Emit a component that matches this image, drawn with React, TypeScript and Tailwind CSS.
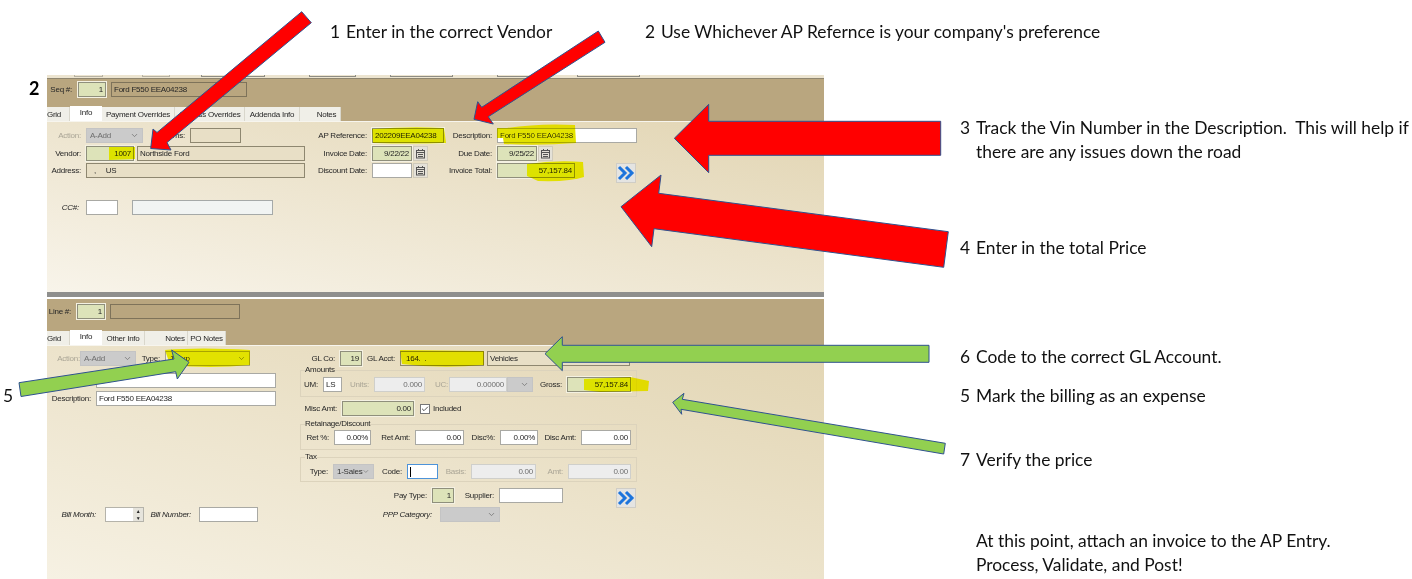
import type { ReactNode } from 'react';
import { Check, ChevronDown } from 'lucide-react';

const boxStyles = {
  green: 'border-[#8f8f7c] bg-[#dde3b9] shadow-[0_0_0_1px_#f4f1e2]',
  tan: 'border-[#8e8770] bg-[#e8dfc6]',
  band: 'border-[#7e735a] bg-[#b9a67f]',
  white: 'border-[#a9a9a4] bg-white',
  gray: 'border-[#cfcfcb] bg-[#ededed] text-[#6f6f6f]',
  sky: 'border-[#a5a9a8] bg-[#f1f4f3]',
  focus: 'border-[#4d93d9] bg-white'
};

function Box({
  w,
  kind = 'white',
  right = false,
  children
}: {
  w: string;
  kind?: keyof typeof boxStyles;
  right?: boolean;
  children?: ReactNode;
}) {
  return (
    <div
      className={`flex h-[15px] shrink-0 items-center overflow-hidden whitespace-nowrap border px-[2px] ${w} ${boxStyles[kind]} ${
        right ? 'justify-end' : ''
      }`}
    >
      {children}
    </div>
  );
}

function Label({
  w,
  muted = false,
  italic = false,
  pr = 'pr-[5px]',
  children
}: {
  w: string;
  muted?: boolean;
  italic?: boolean;
  pr?: string;
  children: ReactNode;
}) {
  return (
    <div
      className={`shrink-0 whitespace-nowrap text-right ${w} ${pr} ${muted ? 'text-[#aaa596]' : ''} ${
        italic ? 'italic' : ''
      }`}
    >
      {children}
    </div>
  );
}

function Select({ w, kind = 'gray', children }: { w: string; kind?: 'gray' | 'tan'; children?: ReactNode }) {
  return (
    <div
      className={`flex h-[15px] shrink-0 items-center justify-between whitespace-nowrap border px-[3px] ${w} ${
        kind === 'gray' ? 'border-[#c4c4c4] bg-[#cbcbcb] text-[#6d6d6d]' : 'border-[#a9a48f] bg-[#f0eee2]'
      }`}
    >
      <span>{children}</span>
      <ChevronDown size={9} color="#6f6f6f" />
    </div>
  );
}

function Row({ className = '', children }: { className?: string; children: ReactNode }) {
  return <div className={`flex h-[15px] items-center ${className}`}>{children}</div>;
}

function CalendarButton() {
  return (
    <div className="ml-px flex h-[15px] w-[15px] shrink-0 items-center justify-center border border-[#cfcabb] bg-[#e4e1d8]">
      <svg width="11" height="11" viewBox="0 0 11 11" fill="none" stroke="#555">
        <rect x="1.5" y="2.5" width="8" height="7.5" />
        <path d="M1.5 4.5h8M3.5 1v2M7.5 1v2M3 6.5h5M3 8.5h5" />
      </svg>
    </div>
  );
}

function NextButton() {
  return (
    <div className="flex h-[20px] w-[20px] shrink-0 items-center justify-center border border-[#cfcdc6] bg-[#e4e4e2]">
      <svg width="18" height="18" viewBox="0 0 18 18" fill="none" stroke="#1c74dc" strokeWidth="3">
        <path d="M2 3l6 6-6 6" />
        <path d="M9 3l6 6-6 6" />
      </svg>
    </div>
  );
}

function Tab({ w, active = false, children }: { w: string; active?: boolean; children?: ReactNode }) {
  return (
    <div
      className={`flex shrink-0 items-center justify-center whitespace-nowrap ${w} ${
        active ? 'h-[16px] bg-white' : 'h-[14px] border-r border-[#d9d7cc] bg-[#f0efe8] pt-px'
      }`}
    >
      {children}
    </div>
  );
}

function Group({ title, className, children }: { title: string; className: string; children: ReactNode }) {
  return (
    <fieldset className={`w-[337px] border border-[#dcd3bc] ${className}`}>
      <legend className="ml-[4px] h-[12px] leading-[12px]">{title}</legend>
      <Row>{children}</Row>
    </fieldset>
  );
}

function TopPanel() {
  return (
    <section>
      <div className="flex h-[3px] bg-[#ece4d0] pl-[27px]">
        <div className="h-[2px] w-[29px] border-b border-x border-[#b7b2a3]" />
        <div className="ml-[39px] h-[2px] w-[28px] border-b border-x border-[#b7b2a3]" />
        <div className="ml-[31px] h-[2px] w-[64px] border-b border-x border-[#8d8c84]" />
        <div className="ml-[44px] h-[2px] w-[47px] border-b border-x border-[#8d8c84]" />
        <div className="ml-[34px] h-[2px] w-[63px] border-b border-x border-[#8d8c84]" />
        <div className="ml-[44px] h-[2px] w-[47px] border-b border-x border-[#8d8c84]" />
        <div className="ml-[33px] h-[2px] w-[63px] border-b border-x border-[#8d8c84]" />
      </div>
      <div className="border-t border-[#8f8670] bg-[#b9a67f] pt-[3px]">
        <Row>
          <Label w="w-[31px]" pr="pr-[6px]">Seq #:</Label>
          <Box w="w-[28px]" kind="green" right>1</Box>
          <div className="ml-[5px]">
            <Box w="w-[136px]" kind="band">Ford F550 EEA04238</Box>
          </div>
        </Row>
        <div className="mt-[9px] flex h-[15px] items-end overflow-hidden">
          <Tab w="w-[23px]"><span className="-ml-[8px]">Grid</span></Tab>
          <Tab w="w-[32px]" active>Info</Tab>
          <Tab w="w-[73px]">Payment Overrides</Tab>
          <Tab w="w-[70px]">Address Overrides</Tab>
          <Tab w="w-[55px]">Addenda Info</Tab>
          <Tab w="w-[41px]"><span className="pl-[13px]">Notes</span></Tab>
        </div>
      </div>
      <div className="h-[171px] border-t border-[#f7f5ee] bg-linear-to-bl from-[#e2d5b3] to-[#f8f4ea] pt-[6px]">
        <div className="flex">
          <div className="w-[263px] shrink-0">
            <Row>
              <Label w="w-[39px]" muted>Action:</Label>
              <Select w="w-[57px]">A-Add</Select>
              <Label w="w-[47px]">Terms:</Label>
              <Box w="w-[51px]" kind="tan" />
            </Row>
            <Row className="mt-[3px]">
              <Label w="w-[39px]">Vendor:</Label>
              <Box w="w-[48px]" kind="green" right>1007</Box>
              <div className="ml-[3px]">
                <Box w="w-[168px]" kind="tan">Northside Ford</Box>
              </div>
            </Row>
            <Row className="mt-[2px]">
              <Label w="w-[39px]">Address:</Label>
              <Box w="w-[219px]" kind="tan"><span className="whitespace-pre pl-[5px]">,     US</span></Box>
            </Row>
            <Row className="mt-[22px]">
              <Label w="w-[39px]" italic pr="pr-[7px]">CC#:</Label>
              <Box w="w-[32px]" />
              <div className="ml-[14px]">
                <Box w="w-[141px]" kind="sky" />
              </div>
            </Row>
          </div>
          <div>
            <Row>
              <Label w="w-[62px]">AP Reference:</Label>
              <Box w="w-[72px]" kind="green">202209EEA04238</Box>
              <Label w="w-[53px]">Description:</Label>
              <Box w="w-[140px]">Ford F550 EEA04238</Box>
            </Row>
            <Row className="mt-[3px]">
              <Label w="w-[62px]">Invoice Date:</Label>
              <Box w="w-[40px]" kind="green" right>9/22/22</Box>
              <CalendarButton />
              <Label w="w-[69px]">Due Date:</Label>
              <Box w="w-[40px]" kind="green" right>9/25/22</Box>
              <CalendarButton />
            </Row>
            <Row className="mt-[2px]">
              <Label w="w-[62px]">Discount Date:</Label>
              <Box w="w-[40px]" />
              <CalendarButton />
              <Label w="w-[69px]">Invoice Total:</Label>
              <Box w="w-[78px]" kind="green" right>57,157.84</Box>
              <div className="ml-[41px] mt-[5px]">
                <NextButton />
              </div>
            </Row>
          </div>
        </div>
      </div>
    </section>
  );
}

function BottomPanel() {
  return (
    <section>
      <div className="bg-[#b9a67f] pt-[5px]">
        <Row>
          <Label w="w-[30px]" pr="pr-[6px]">Line #:</Label>
          <Box w="w-[28px]" kind="green" right>1</Box>
          <div className="ml-[5px]">
            <Box w="w-[130px]" kind="band" />
          </div>
        </Row>
        <div className="mt-[11px] flex h-[15px] items-end overflow-hidden">
          <Tab w="w-[23px]"><span className="-ml-[8px]">Grid</span></Tab>
          <Tab w="w-[32px]" active>Info</Tab>
          <Tab w="w-[43px]">Other Info</Tab>
          <Tab w="w-[43px]"><span className="pl-[18px]">Notes</span></Tab>
          <Tab w="w-[38px]">PO Notes</Tab>
        </div>
      </div>
      <div className="h-[234px] border-t border-[#f7f5ee] bg-linear-to-bl from-[#e2d5b3] to-[#f6f1e3] pt-[5px]">
        <div className="flex">
          <div className="w-[253px] shrink-0">
            <Row>
              <Label w="w-[33px]" muted pr="pr-0">Action:</Label>
              <Select w="w-[56px]">A-Add</Select>
              <Label w="w-[29px]">Type:</Label>
              <Select w="w-[85px]" kind="tan">
                <span className="pl-px">1-Exp</span>
              </Select>
            </Row>
            <Row className="mt-[7px]">
              <div className="w-[49px]" />
              <Box w="w-[180px]" />
            </Row>
            <Row className="mt-[3px]">
              <Label w="w-[49px]">Description:</Label>
              <Box w="w-[180px]">Ford F550 EEA04238</Box>
            </Row>
            <Row className="mt-[101px]">
              <Label w="w-[58px]" italic pr="pr-[9px]">Bill Month:</Label>
              <div className="flex h-[15px] w-[39px] border border-[#b5b3aa] bg-white">
                <div className="flex-1" />
                <div className="flex w-[10px] flex-col items-center justify-center gap-px bg-[#e6e4dc] text-[5px] leading-[6px]">
                  <span>▲</span>
                  <span>▼</span>
                </div>
              </div>
              <Label w="w-[55px]" italic pr="pr-[8px]">Bill Number:</Label>
              <Box w="w-[59px]" />
            </Row>
          </div>
          <div>
            <Row>
              <Label w="w-[40px]">GL Co:</Label>
              <Box w="w-[22px]" kind="green" right>19</Box>
              <Label w="w-[38px]">GL Acct:</Label>
              <Box w="w-[84px]" kind="tan"><span className="whitespace-pre pl-[3px]">164.  .</span></Box>
              <div className="ml-[3px]">
                <Box w="w-[143px]" kind="tan">Vehicles</Box>
              </div>
            </Row>
            <Group title="Amounts" className="-mt-[2px] pb-[4px] pt-px">
              <Label w="w-[22px]">UM:</Label>
              <Box w="w-[19px]">LS</Box>
              <Label w="w-[32px]" muted>Units:</Label>
              <Box w="w-[51px]" kind="gray" right>0.000</Box>
              <Label w="w-[24px]" muted pr="pr-px">UC:</Label>
              <Box w="w-[58px]" kind="gray" right>0.00000</Box>
              <Select w="w-[26px]" />
              <Label w="w-[34px]">Gross:</Label>
              <Box w="w-[64px]" kind="green" right>57,157.84</Box>
            </Group>
            <Row className="mt-[4px]">
              <Label w="w-[42px]">Misc Amt:</Label>
              <Box w="w-[72px]" kind="green" right>0.00</Box>
              <div className="ml-[6px] flex h-[10px] w-[10px] items-center justify-center border border-[#777] bg-white">
                <Check size={8} strokeWidth={2.5} color="#333" />
              </div>
              <span className="ml-[3px]">Included</span>
            </Row>
            <Group title="Retainage/Discount" className="mt-[2px] pb-[4px]">
              <Label w="w-[33px]">Ret %:</Label>
              <Box w="w-[37px]" right>0.00%</Box>
              <Label w="w-[44px]">Ret Amt:</Label>
              <Box w="w-[49px]" right>0.00</Box>
              <Label w="w-[36px]">Disc%:</Label>
              <Box w="w-[38px]" right>0.00%</Box>
              <Label w="w-[43px]">Disc Amt:</Label>
              <Box w="w-[50px]" right>0.00</Box>
            </Group>
            <Group title="Tax" className="mt-px pb-[2px] pt-px">
              <Label w="w-[32px]">Type:</Label>
              <Select w="w-[41px]">
                <span className="text-[#333]">1-Sales</span>
              </Select>
              <Label w="w-[33px]">Code:</Label>
              <Box w="w-[31px]" kind="focus"><span className="h-[10px] w-px bg-black" /></Box>
              <Label w="w-[33px]" muted>Basis:</Label>
              <Box w="w-[65px]" kind="gray" right>0.00</Box>
              <Label w="w-[32px]" muted>Amt:</Label>
              <Box w="w-[63px]" kind="gray" right>0.00</Box>
            </Group>
            <Row className="mt-[6px]">
              <Label w="w-[132px]">Pay Type:</Label>
              <Box w="w-[22px]" kind="green" right>1</Box>
              <Label w="w-[45px]">Supplier:</Label>
              <Box w="w-[64px]" />
              <div className="ml-[53px] mt-[5px]">
                <NextButton />
              </div>
            </Row>
            <Row className="mt-[4px]">
              <Label w="w-[140px]" italic pr="pr-[8px]">PPP Category:</Label>
              <Select w="w-[60px]" />
            </Row>
          </div>
        </div>
      </div>
    </section>
  );
}

function Note({ className, num, children }: { className: string; num: string; children: ReactNode }) {
  return (
    <div className={`absolute flex whitespace-pre ${className}`}>
      <span className="w-[16px]">{num}</span>
      <span>{children}</span>
    </div>
  );
}

const highlights = [
  'M372 129 Q410 126 444 128 L446 143 Q410 144 373 143 Z',
  'M109 147 L135 147 L135 159 L109 160 Z',
  'M497 128 L507 128 Q540 123 575 125 L576 143 Q540 146 504 144 L503 138 L497 138 Z',
  'M527 164 Q555 160 583 162 L584 177 Q570 182 538 181 L527 176 Z',
  'M165 350 Q200 347 250 350 L250 365 Q210 369 170 365 Z',
  'M400 350 L484 351 L484 365 Q440 369 402 364 Z',
  'M584 379 L630 377 L649 381 L648 391 L600 392 L584 390 Z'
];

const arrows = [
  {
    fill: '#ff0000',
    points: '301.7,11.7 311.3,22.7 167,142.5 171,150 150.7,148.5 153,129 157,132.5'
  },
  {
    fill: '#ff0000',
    points: '598.3,31 605,42.3 488.3,116.7 493.3,124 474,119.3 477.7,101.7 481.7,107.3'
  },
  {
    fill: '#ff0000',
    points: '674.3,138.3 708.7,104.3 708.7,121.3 940.7,121.3 940.7,155.3 708.7,155.3 708.7,172.7'
  },
  {
    fill: '#ff0000',
    points: '621,206.7 661,175 658.7,193.3 948.3,231.7 943.7,267.3 654,228.7 651.7,246.7'
  },
  {
    fill: '#92d050',
    points: '545,353.7 562.3,336.7 562.3,345.3 929,345.3 929,362.3 562.3,362.3 562.3,370.7'
  },
  {
    fill: '#92d050',
    points: '672.7,402.3 684,393.3 682.3,399.3 945.3,443.3 943.7,454 681,409.3 681.7,414.3'
  },
  {
    fill: '#92d050',
    points: '189,362.3 171.7,350 174,359 19,382.7 21,396.5 175.7,371.7 177.3,379'
  }
];

export default function App() {
  return (
    <div className="relative h-[579px] w-[1412px] overflow-hidden bg-white font-['Liberation_Sans',Arial,sans-serif] text-[8px] tracking-[-0.25px] text-[#262626]">
      <div className="ml-[47px] w-[777px] pt-[75px] blur-[0.35px]">
        <TopPanel />
        <div className="h-[5px] bg-[#8f8f8d]" />
        <div className="h-[2px] bg-white" />
        <BottomPanel />
      </div>

      <svg className="pointer-events-none absolute left-0 top-0 mix-blend-darken blur-[0.5px]" width="1412" height="579">
        {highlights.map((d) => (
          <path key={d} d={d} fill="#e2e200" />
        ))}
      </svg>
      <svg className="pointer-events-none absolute left-0 top-0" width="1412" height="579">
        {arrows.map((arrow) => (
          <polygon key={arrow.points} points={arrow.points} fill={arrow.fill} stroke="#2f528f" strokeWidth="1" />
        ))}
      </svg>

      <div className="font-['Lato',sans-serif] text-[17.4px] leading-[24px] tracking-normal text-[#111]">
        <div className="absolute left-[29px] top-[76px] text-[18px] font-bold text-black">2</div>
        <Note className="left-[330px] top-[20px]" num="1">Enter in the correct Vendor</Note>
        <Note className="left-[645px] top-[20px]" num="2">Use Whichever AP Refernce is your company's preference</Note>
        <Note className="left-[960px] top-[116px]" num="3">
          Track the Vin Number in the Description.  This will help if{'\n'}there are any issues down the road
        </Note>
        <Note className="left-[960px] top-[236px]" num="4">Enter in the total Price</Note>
        <Note className="left-[960px] top-[345px]" num="6">Code to the correct GL Account.</Note>
        <Note className="left-[960px] top-[384px]" num="5">Mark the billing as an expense</Note>
        <Note className="left-[960px] top-[448px]" num="7">Verify the price</Note>
        <div className="absolute left-[3px] top-[384px]">5</div>
        <div className="absolute left-[976px] top-[529px] whitespace-pre">
          At this point, attach an invoice to the AP Entry.{'\n'}Process, Validate, and Post!
        </div>
      </div>
    </div>
  );
}
